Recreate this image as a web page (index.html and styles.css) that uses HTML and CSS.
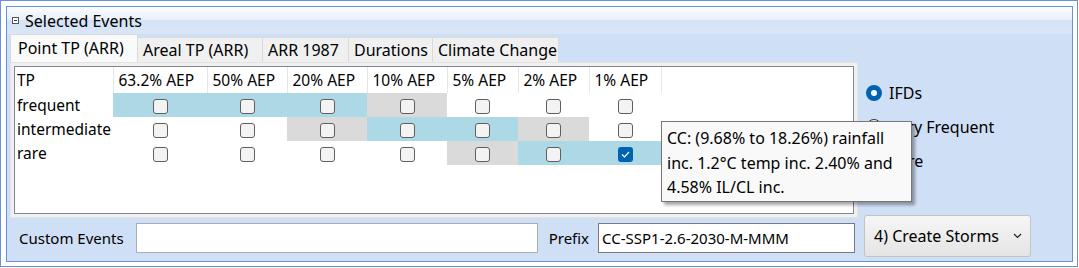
FILE: index.html
```html
<!DOCTYPE html>
<html lang="en">
<head>
  <meta charset="UTF-8">
  <title>Selected Events</title>
  <link rel="stylesheet" href="styles.css">
</head>
<body>
  <div class="frame">
    <div class="group">
      <!-- group header -->
      <div class="group-head">
        <span class="collapse"></span>
        <span>Selected Events</span>
      </div>

      <div class="group-main">
        <div class="tabs-area">
          <div class="tabs">
            <div class="tab active">Point TP (ARR)</div>
            <div class="tab">Areal TP (ARR)</div>
            <div class="tab">ARR 1987</div>
            <div class="tab">Durations</div>
            <div class="tab">Climate Change</div>
          </div>
          <div class="panel">
            <div class="grid-box">
              <table class="grid">
                <colgroup>
                  <col style="width:98px"><col style="width:94px"><col style="width:80px"><col style="width:80px">
                  <col style="width:80px"><col style="width:71px"><col style="width:71px"><col style="width:72px">
                </colgroup>
                <thead>
                  <tr>
                    <th class="first">TP</th>
                    <th>63.2% AEP</th>
                    <th>50% AEP</th>
                    <th>20% AEP</th>
                    <th>10% AEP</th>
                    <th>5% AEP</th>
                    <th>2% AEP</th>
                    <th>1% AEP</th>
                  </tr>
                </thead>
                <tbody>
                  <tr>
                    <td class="label">frequent</td>
                    <td class="blue"><span class="check"></span></td>
                    <td class="blue"><span class="check"></span></td>
                    <td class="blue"><span class="check"></span></td>
                    <td class="grey"><span class="check"></span></td>
                    <td><span class="check"></span></td>
                    <td><span class="check"></span></td>
                    <td><span class="check"></span></td>
                  </tr>
                  <tr>
                    <td class="label">intermediate</td>
                    <td><span class="check"></span></td>
                    <td><span class="check"></span></td>
                    <td class="grey"><span class="check"></span></td>
                    <td class="blue"><span class="check"></span></td>
                    <td class="blue"><span class="check"></span></td>
                    <td class="grey"><span class="check"></span></td>
                    <td><span class="check"></span></td>
                  </tr>
                  <tr>
                    <td class="label">rare</td>
                    <td><span class="check"></span></td>
                    <td><span class="check"></span></td>
                    <td><span class="check"></span></td>
                    <td><span class="check"></span></td>
                    <td class="grey"><span class="check"></span></td>
                    <td class="blue"><span class="check"></span></td>
                    <td class="blue"><span class="check checked">
                      <svg width="9" height="7" viewBox="0 0 9 7"><path d="M1 3.5 L3.5 6 L8 1" fill="none" stroke="#fff" stroke-width="1.2"/></svg>
                    </span></td>
                  </tr>
                </tbody>
              </table>
            </div>
          </div>
        </div>

        <div class="radios">
          <div class="radio-row"><span class="radio on"></span>IFDs</div>
          <div class="radio-row"><span class="radio"></span>Very Frequent</div>
          <div class="radio-row"><span class="radio"></span>Rare</div>
        </div>
      </div>

      <div class="bottom">
        <span class="field-label">Custom Events</span>
        <div class="input custom"></div>
        <span class="field-label prefix-label">Prefix</span>
        <div class="input prefix">CC-SSP1-2.6-2030-M-MMM</div>
        <div class="combo">
          <span>4) Create Storms</span>
          <svg width="9" height="6" viewBox="0 0 9 6"><path d="M1 1 L4.5 4.5 L8 1" fill="none" stroke="#222" stroke-width="1.2"/></svg>
        </div>
      </div>

      <!-- hover tooltip -->
      <div class="tooltip">CC: (9.68% to 18.26%) rainfall<br>inc. 1.2°C temp inc. 2.40% and<br>4.58% IL/CL inc.</div>
    </div>
  </div>
</body>
</html>
```

FILE: styles.css
```css
body {
  margin: 0;
  padding: 0;
  background: #ffffff;
  font-family: 'Noto Sans', sans-serif;
  font-size: 15px;
  color: #000;
}

.frame {
  width: 1078px;
  height: 267px;
  box-sizing: border-box;
  border: 1px solid #6792d6;
  padding: 5px 4px 4px 5px;
}

.group {
  position: relative;
  height: 100%;
  box-sizing: border-box;
  border: 1px solid #6792d6;
  background: #cfdff5;
}

.group-head {
  height: 27px;
  display: flex;
  align-items: center;
  gap: 6px;
  padding-left: 5px;
  font-size: 16px;
  background: linear-gradient(#fbfcfe, #e9f0fa 48%, #d5e3f6 50%, #d8e6f7);
}

.collapse {
  width: 5px;
  height: 5px;
  border: 1px solid #555;
  position: relative;
  background: #fff;
}

.collapse::after {
  content: '';
  position: absolute;
  left: 1px;
  top: 2px;
  width: 3px;
  height: 1px;
  background: #333;
}

.group-main {
  display: flex;
  padding-left: 3px;
}

.tabs {
  display: flex;
  align-items: flex-end;
  height: 28px;
  font-size: 16px;
}

.tab {
  height: 24px;
  line-height: 25px;
  padding: 0 5px;
  background: #f0f0f0;
  border: 1px solid #dadada;
  border-bottom: none;
  margin-left: -1px;
  white-space: nowrap;
}

.tab.active {
  height: 27px;
  line-height: 27px;
  background: #fafafa;
  padding: 0 7px;
  margin-left: 0;
  position: relative;
  z-index: 1;
}

.tabs .tab:nth-child(2) { width: 114px; }
.tabs .tab:nth-child(3) { width: 75px; }
.tabs .tab:nth-child(4) { width: 73px; }
.tabs .tab:nth-child(5) { width: 115px; }
.tabs .tab.active { width: 112px; }

.panel {
  width: 848px;
  height: 156px;
  box-sizing: border-box;
  padding: 3px;
  background: #f0f0f0;
  border: 1px solid #e3e3e3;
}

.grid-box {
  height: 100%;
  box-sizing: border-box;
  border: 1px solid #828790;
  background: #fff;
}

.grid {
  border-collapse: collapse;
  table-layout: fixed;
  width: 646px;
  font-size: 15.5px;
}

.grid th {
  height: 26px;
  padding: 0 0 0 5px;
  font-weight: normal;
  text-align: left;
  white-space: nowrap;
  border-right: 1px solid #e6e6e6;
  box-sizing: border-box;
}

.grid th.first {
  padding-left: 2px;
}

.grid td {
  height: 24px;
  padding: 0;
  text-align: center;
  vertical-align: middle;
}

.grid td.label {
  text-align: left;
  padding-left: 2px;
}

.grid td.blue {
  background: #add8e6;
}

.grid td.grey {
  background: #dadada;
}

.check {
  display: inline-block;
  width: 15px;
  height: 15px;
  box-sizing: border-box;
  border: 1px solid #5f5f5f;
  border-radius: 3px;
  background: #f3f3f3;
  vertical-align: middle;
}

.check.checked {
  border: none;
  background: #0063b1;
  display: inline-flex;
  align-items: center;
  justify-content: center;
}

.radios {
  padding: 50px 0 0 8px;
  display: flex;
  flex-direction: column;
  gap: 17px;
  font-size: 16px;
}

.radio-row {
  display: flex;
  align-items: center;
  gap: 7px;
  height: 17px;
}

.radio {
  width: 16px;
  height: 16px;
  box-sizing: border-box;
  border-radius: 50%;
  border: 1px solid #333;
  background: #fff;
}

.radio.on {
  border: 5px solid #0063b1;
}

.bottom {
  display: flex;
  align-items: flex-start;
  padding-left: 12px;
  margin-top: -3px;
}

.field-label {
  margin: 8px 12px 0 0;
  line-height: 30px;
}

.prefix-label {
  margin-left: 11px;
  margin-right: 9px;
}

.input {
  height: 30px;
  box-sizing: border-box;
  border: 1px solid #abadb3;
  background: #fff;
  line-height: 28px;
  padding-left: 3px;
  margin-top: 8px;
}

.input.custom {
  width: 402px;
}

.input.prefix {
  width: 257px;
  border-color: #7a7a7a;
}

.combo {
  margin-left: 9px;
  width: 167px;
  height: 42px;
  box-sizing: border-box;
  border: 1px solid #c3c3c3;
  border-radius: 3px;
  background: linear-gradient(#f6f6f6, #e4e4e4);
  display: flex;
  align-items: center;
  justify-content: space-between;
  padding: 0 8px 0 9px;
  font-size: 16px;
}

.tooltip {
  position: absolute;
  left: 654px;
  top: 114px;
  width: 251px;
  height: 81px;
  box-sizing: border-box;
  padding: 4px 5px;
  background: #f9f9f9;
  border: 1px solid #767676;
  box-shadow: 3px 3px 3px rgba(0, 0, 0, 0.35);
  font-size: 16px;
  line-height: 24.5px;
}
```
